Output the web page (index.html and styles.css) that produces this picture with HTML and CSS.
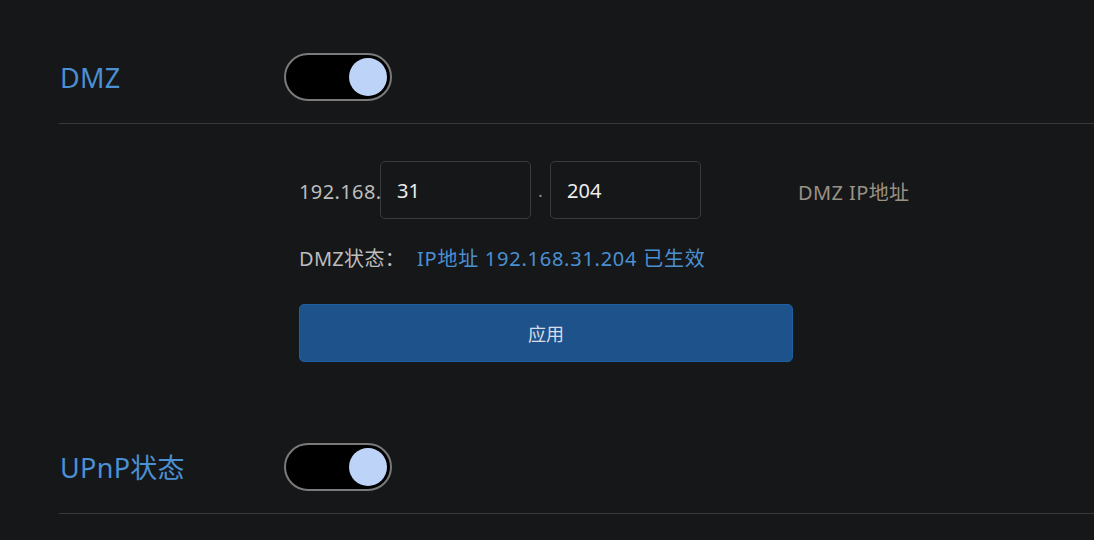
FILE: index.html
```html
<!DOCTYPE html>
<html lang="zh-CN">
<head>
<meta charset="utf-8">
<title>DMZ</title>
<link rel="stylesheet" href="styles.css">
</head>
<body>
<div class="page">
  <section class="section">
    <div class="head">
      <div class="title">DMZ</div>
      <div class="toggle on"><span class="knob"></span></div>
    </div>
    <div class="body">
      <div class="ip-row">
        <span class="prefix">192.168.</span>
        <div class="ipbox">31</div>
        <span class="dot">.</span>
        <div class="ipbox">204</div>
        <span class="hint">DMZ IP地址</span>
      </div>
      <div class="status">
        <span class="status-label">DMZ状态：</span>
        <span class="status-value">IP地址 192.168.31.204 已生效</span>
      </div>
      <button class="apply">应用</button>
    </div>
  </section>
  <section class="section">
    <div class="head">
      <div class="title">UPnP状态</div>
      <div class="toggle on"><span class="knob"></span></div>
    </div>
  </section>
</div>
</body>
</html>
```

FILE: styles.css
```css
* { box-sizing: border-box; }
html, body { margin: 0; padding: 0; }
body {
  background: #161719;
  font-family: "Noto Sans", "Noto Sans CJK SC", sans-serif;
  color: #bdbdbd;
  width: 1094px;
  height: 540px;
  overflow: hidden;
}
.page { padding-left: 59px; }
.head {
  display: flex;
  align-items: center;
  padding-top: 53px;
  padding-bottom: 22px;
  border-bottom: 1px solid #38393b;
}
.title {
  width: 225px;
  padding-left: 1px;
  padding-top: 2px;
  font-size: 27px;
  letter-spacing: 0.3px;
  color: #4a90d2;
  line-height: 46px;
}
.toggle {
  width: 108px;
  height: 48px;
  border: 2px solid #7a7a7a;
  border-radius: 24px;
  background: #000;
  display: flex;
  align-items: center;
  justify-content: flex-end;
  padding-right: 3px;
}
.knob {
  width: 38px;
  height: 38px;
  border-radius: 50%;
  background: #bed3f8;
}
.body {
  padding-left: 240px;
  padding-top: 38px;
  padding-bottom: 28px;
}
.ip-row {
  display: flex;
  align-items: center;
  height: 58px;
}
.prefix {
  font-size: 20px;
  letter-spacing: 0.4px;
  width: 81px;
  overflow: hidden;
  white-space: nowrap;
}
.ipbox {
  width: 151px;
  height: 58px;
  border: 1px solid #3a3b3e;
  border-radius: 5px;
  background: #161719;
  color: #ececec;
  font-size: 20px;
  padding-left: 16px;
  display: flex;
  align-items: center;
  margin-top: -2px;
}
.dot {
  width: 19px;
  text-align: center;
  font-size: 16px;
  color: #9a9a9a;
}
.hint {
  margin-left: 97px;
  font-size: 20px;
  letter-spacing: 0.4px;
  color: #9a9186;
}
.status {
  margin-top: 25px;
  font-size: 20px;
  line-height: 28px;
  display: flex;
}
.status-label { width: 118px; letter-spacing: 0.3px; }
.status-value { color: #4a90d2; letter-spacing: 0.75px; }
.apply {
  display: block;
  margin-top: 31px;
  width: 494px;
  height: 58px;
  background: #1e528a;
  border: 1px solid #1f5ea3;
  border-radius: 5px;
  color: #d9dee6;
  font-family: "Noto Sans CJK SC", sans-serif;
  font-size: 18px;
}
```
